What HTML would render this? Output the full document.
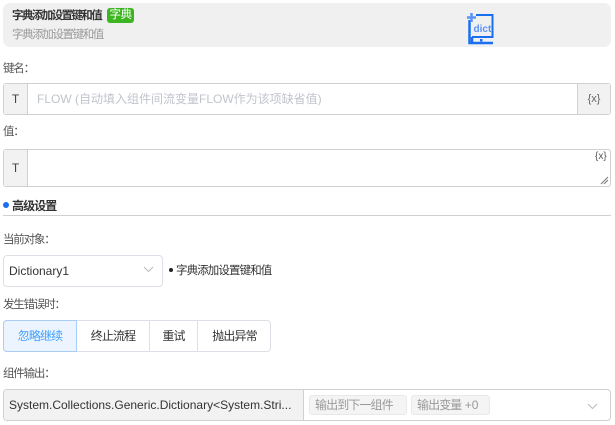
<!DOCTYPE html>
<html><head><meta charset="utf-8"><style>
*{box-sizing:border-box;margin:0;padding:0}
body{width:615px;height:425px;background:#fff;font-family:"Liberation Sans","Noto Sans CJK SC",sans-serif;font-size:12px;color:#333;position:relative;overflow:hidden}
.a{position:absolute}
.lbl{color:#555;font-size:11.5px;letter-spacing:-1.2px}
.c{font-size:11px;letter-spacing:-0.9px}
</style></head><body>
<div class="a" style="left:3px;top:3px;width:608px;height:44px;background:#f0f0f0;border-radius:7px"></div>
<div class="a c" style="left:12px;top:8px;font-weight:bold;font-size:11.5px;letter-spacing:-1.6px;color:#333;line-height:16px">字典添加设置键和值</div>
<div class="a" style="left:107px;top:8px;width:27px;height:15px;background:#3cb521;border-radius:3px;color:#fff;font-size:11.5px;line-height:15px;text-align:center;letter-spacing:-0.5px">字典</div>
<div class="a c" style="left:12px;top:27px;color:#999;font-size:11.5px;letter-spacing:-1.4px;line-height:16px">字典添加设置键和值</div>
<svg class="a" style="left:467px;top:12px" width="28" height="33" viewBox="0 0 28 33">
<path d="M2.5 8 V31 H26" fill="none" stroke="#1a6ef0" stroke-width="2.5"/>
<path d="M9 3 H25.5 V25 H5" fill="none" stroke="#1a6ef0" stroke-width="2"/>
<path d="M5 25 V31" stroke="#1a6ef0" stroke-width="2.5"/>
<rect x="13" y="27" width="2.5" height="2.5" fill="#1a6ef0"/>
<path d="M4.5 1 V10 M0 5.5 H9" stroke="#5b93f5" stroke-width="2.5"/>
<text x="6.5" y="20" font-family="Liberation Sans" font-weight="bold" font-size="10" fill="#5b93f5">dict</text>
</svg>
<div class="a lbl" style="left:3px;top:60px">键名：</div>
<div class="a" style="left:3px;top:83px;width:608px;height:32px;border:1px solid #d0d0d0;border-radius:3px;background:#fff"></div>
<div class="a" style="left:4px;top:84px;width:24px;height:30px;background:#f2f2f2;border-right:1px solid #d0d0d0;text-align:center;line-height:30px;color:#444">T</div>
<div class="a" style="left:37px;top:84px;line-height:30px;color:#c0c4cc">FLOW (自动填入组件间流变量FLOW作为该项缺省值)</div>
<div class="a" style="left:577px;top:84px;width:33px;height:30px;background:#f2f2f2;border-left:1px solid #d0d0d0;text-align:center;line-height:30px;color:#666;font-size:11px">{x}</div>
<div class="a lbl" style="left:3px;top:123px">值：</div>
<div class="a" style="left:3px;top:149px;width:608px;height:38px;border:1px solid #d0d0d0;border-radius:3px;background:#fff"></div>
<div class="a" style="left:4px;top:150px;width:24px;height:36px;background:#f2f2f2;border-right:1px solid #d0d0d0;text-align:center;line-height:36px;color:#444">T</div>
<div class="a" style="left:595px;top:151px;color:#555;font-size:10px">{x}</div>
<svg class="a" style="left:600px;top:176px" width="9" height="9"><path d="M1 8 L8 1 M4 8 L8 4" stroke="#777" stroke-width="1"/></svg>
<div class="a" style="left:3px;top:202px;width:6px;height:6px;border-radius:50%;background:#1a6ef0"></div>
<div class="a c" style="left:12px;top:197px;font-weight:bold;color:#333;font-size:12px">高级设置</div>
<div class="a" style="left:3px;top:215px;width:608px;height:1px;background:#d0d0d0"></div>
<div class="a lbl" style="left:3px;top:231px">当前对象：</div>
<div class="a" style="left:3px;top:255px;width:160px;height:32px;border:1px solid #dcdfe6;border-radius:4px"></div>
<div class="a" style="left:9px;top:255px;line-height:32px;color:#333">Dictionary1</div>
<svg class="a" style="left:143px;top:266px" width="11" height="7"><path d="M1 1 L5.5 5.5 L10 1" fill="none" stroke="#bbb"/></svg>
<div class="a" style="left:169px;top:268px;width:4px;height:4px;border-radius:50%;background:#222"></div>
<div class="a c" style="left:176px;top:262px;color:#333;font-size:11.5px">字典添加设置键和值</div>
<div class="a lbl" style="left:3px;top:296px">发生错误时：</div>
<div class="a" style="left:3px;top:320px;width:268px;height:32px;border:1px solid #dcdfe6;border-radius:4px"></div>
<div class="a c" style="left:3px;top:320px;width:74px;height:32px;background:#ecf5ff;border:1px solid #a9cdf5;border-radius:4px 0 0 4px;text-align:center;line-height:30px;color:#409eff;font-size:12px">忽略继续</div>
<div class="a c" style="left:77px;top:320px;width:73px;height:32px;border-right:1px solid #dcdfe6;text-align:center;line-height:32px;font-size:12px">终止流程</div>
<div class="a c" style="left:150px;top:320px;width:48px;height:32px;border-right:1px solid #dcdfe6;text-align:center;line-height:32px;font-size:12px">重试</div>
<div class="a c" style="left:198px;top:320px;width:73px;height:32px;text-align:center;line-height:32px;font-size:12px">抛出异常</div>
<div class="a lbl" style="left:3px;top:365px">组件输出：</div>
<div class="a" style="left:3px;top:389px;width:608px;height:32px;border:1px solid #d0d0d0;border-radius:4px;overflow:hidden">
<div class="a" style="left:0;top:0;width:300px;height:30px;background:#f2f2f2;border-right:1px solid #d0d0d0;line-height:30px;padding-left:5px;color:#333;white-space:nowrap">System.Collections.Generic.Dictionary&lt;System.Stri...</div>
<div class="a c" style="left:305px;top:5px;width:98px;height:20px;padding:0 5px;background:#f4f4f5;border:1px solid #e9e9eb;border-radius:3px;line-height:18px;color:#999;font-size:12px">输出到下一组件</div>
<div class="a" style="left:407px;top:5px;height:20px;width:79px;padding:0 5px;background:#f4f4f5;border:1px solid #e9e9eb;border-radius:3px;line-height:18px;color:#999"><span class="c" style="font-size:12px">输出变量</span> +0</div>
<svg class="a" style="left:583px;top:13px" width="11" height="7"><path d="M1 1 L5.5 5.5 L10 1" fill="none" stroke="#bbb"/></svg>
</div>
</body></html>
